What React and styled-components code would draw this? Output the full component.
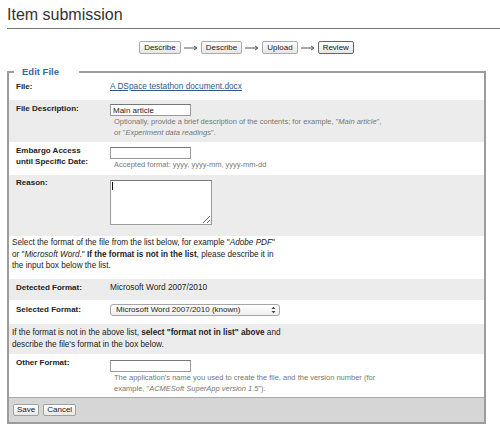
import React from 'react';
import styled, { createGlobalStyle } from 'styled-components';

const GlobalStyle = createGlobalStyle`
  body {
    margin: 0;
    background: #fff;
    font-family: "Liberation Sans", Arial, sans-serif;
    color: #222;
  }
`;

const steps = [
  { label: 'Describe' },
  { label: 'Describe' },
  { label: 'Upload' },
  { label: 'Review', current: true },
];

const Arrow = () => (
  <svg width='14' height='7' viewBox='0 0 14 7'>
    <path d='M0 4 H12.5' stroke='#555' strokeWidth='1' fill='none' />
    <path d='M10 2 L13 4 L10 6' stroke='#555' strokeWidth='1' fill='none' />
  </svg>
);

const SelectArrows = () => (
  <svg width='5' height='8' viewBox='0 0 5 8'>
    <path d='M0.5 3 L2.5 0.8 L4.5 3 Z' fill='#444' />
    <path d='M0.5 5 L2.5 7.2 L4.5 5 Z' fill='#444' />
  </svg>
);

const App = () => {
  return (
    <Page>
      <GlobalStyle />
      <Title>Item submission</Title>
      <Steps>
        {steps.map((s, i) => (
          <React.Fragment key={i}>
            {i > 0 && (
              <ArrowBox>
                <Arrow />
              </ArrowBox>
            )}
            <StepButton $current={s.current}>{s.label}</StepButton>
          </React.Fragment>
        ))}
      </Steps>

      <Fieldset>
        <Legend>Edit File</Legend>

        <Row $pt={2.5} $pb={8}>
          <Label>File:</Label>
          <Value>
            <FileLink href='#'>A DSpace testathon document.docx</FileLink>
          </Value>
        </Row>

        <Row $shade $pt={3} $pb={4}>
          <Label>File Description:</Label>
          <div>
            <TextInput defaultValue='Main article' $mt={1} />
            <Help>
              Optionally, provide a brief description of the contents; for
              example, "<i>Main article</i>",
              <br />
              or "<i>Experiment data readings</i>".
            </Help>
          </div>
        </Row>

        <Row $pt={2.5} $pb={5}>
          <Label>
            Embargo Access
            <br />
            until Specific Date:
          </Label>
          <div>
            <TextInput $mt={2} />
            <Help>Accepted format: yyyy, yyyy-mm, yyyy-mm-dd</Help>
          </div>
        </Row>

        <Row $shade $pt={2.5} $pb={7.5}>
          <Label>Reason:</Label>
          <div>
            <TextareaBox>
              <Reason />
              <Caret />
            </TextareaBox>
          </div>
        </Row>

        <Note $pt={1} $pb={7.5}>
          Select the format of the file from the list below, for example "
          <i>Adobe PDF</i>"
          <br />
          or "<i>Microsoft Word</i>." <b>If the format is not in the list</b>,
          please describe it in
          <br />
          the input box below the list.
        </Note>

        <Row $shade $pt={3} $pb={6.5}>
          <Label>Detected Format:</Label>
          <Value>Microsoft Word 2007/2010</Value>
        </Row>

        <Row $pt={4} $pb={8}>
          <Label>Selected Format:</Label>
          <div>
            <SelectBox>
              <FormatSelect defaultValue='docx'>
                <option value='docx'>Microsoft Word 2007/2010 (known)</option>
                <option value='other'>format not in list</option>
              </FormatSelect>
              <SelectIcon>
                <SelectArrows />
              </SelectIcon>
            </SelectBox>
          </div>
        </Row>

        <Note $shade $pt={3} $pb={4}>
          If the format is not in the above list,{' '}
          <b>select "format not in list" above</b> and
          <br />
          describe the file's format in the box below.
        </Note>

        <Row $pt={3} $pb={3}>
          <Label>Other Format:</Label>
          <div>
            <TextInput $mt={3} />
            <Help>
              The application's name you used to create the file, and the
              version number (for
              <br />
              example, "<i>ACMESoft SuperApp version 1.5</i>").
            </Help>
          </div>
        </Row>

        <Footer>
          <FormButton>Save</FormButton>
          <FormButton>Cancel</FormButton>
        </Footer>
      </Fieldset>
    </Page>
  );
};

export default App;

const Page = styled.div`
  padding-left: 7px;
`;

const Title = styled.h1`
  margin: 0;
  padding: 5px 0 3px;
  font-size: 16px;
  line-height: 20px;
  font-weight: normal;
  color: #333;
  border-bottom: 1px solid #777;
`;

const Steps = styled.nav`
  width: 479px;
  height: 13px;
  margin-top: 12px;
  display: flex;
  align-items: center;
  justify-content: center;
`;

const ArrowBox = styled.span`
  display: flex;
  margin: 0 3px;
`;

const StepButton = styled.span`
  box-sizing: border-box;
  height: 13px;
  padding: 0 4px;
  font-size: 8px;
  line-height: 11px;
  color: #222;
  border: 1px solid ${(p) => (p.$current ? '#666' : '#aaa')};
  border-radius: 2px;
  background: linear-gradient(#fff, #e6e6e6);
`;

const Fieldset = styled.fieldset`
  box-sizing: border-box;
  width: 479px;
  min-width: 0;
  margin: 12px 0 0;
  padding: 0;
  border: 2px solid #9c9c9c;
`;

const Legend = styled.legend`
  margin-left: 5px;
  padding: 0 20px 0 8px;
  font-size: 9.5px;
  line-height: 12px;
  font-weight: bold;
  color: #3a6aa3;
`;

const Row = styled.div`
  display: grid;
  grid-template-columns: 94px 1fr;
  align-items: start;
  padding: ${(p) => p.$pt}px 7px ${(p) => p.$pb}px;
  background: ${(p) => (p.$shade ? '#ececec' : '#fff')};
  font-size: 8px;
  line-height: 11.5px;
`;

const Label = styled.div`
  font-weight: bold;
  color: #222;
`;

const Value = styled.div`
  font-size: 8.3px;
`;

const FileLink = styled.a`
  color: #2f5b8a;
  text-decoration: underline;
`;

const TextInput = styled.input`
  display: block;
  box-sizing: border-box;
  width: 81px;
  height: 12px;
  margin: ${(p) => p.$mt || 0}px 0 0;
  padding: 0 2px;
  font-family: inherit;
  font-size: 8px;
  color: #222;
  border: 1px solid #9a9a9a;
  border-top-color: #777;
  background: #fff;
  outline: none;
`;

const Help = styled.div`
  margin-left: 4px;
  font-size: 7.5px;
  line-height: 11px;
  color: #777;
`;

const TextareaBox = styled.div`
  position: relative;
  display: inline-block;
  margin-top: 3px;
`;

const Reason = styled.textarea`
  display: block;
  box-sizing: border-box;
  width: 102px;
  height: 45px;
  margin: 0;
  border: 1px solid #9a9a9a;
  border-top-color: #777;
  outline: none;
  resize: both;
`;

const Caret = styled.span`
  position: absolute;
  left: 2px;
  top: 2px;
  width: 1px;
  height: 8px;
  background: #111;
`;

const Note = styled.div`
  padding: ${(p) => p.$pt}px 3px ${(p) => p.$pb}px;
  background: ${(p) => (p.$shade ? '#ececec' : '#fff')};
  font-size: 8.2px;
  line-height: 11.5px;
  color: #222;
`;

const SelectBox = styled.div`
  position: relative;
  display: inline-block;
`;

const FormatSelect = styled.select`
  display: block;
  box-sizing: border-box;
  width: 170px;
  height: 12px;
  margin: 0;
  padding: 0 5px;
  appearance: none;
  font-family: inherit;
  font-size: 8px;
  line-height: 10px;
  color: #222;
  border: 1px solid #a6a6a6;
  border-radius: 3px;
  background: linear-gradient(#fff, #eee);
  outline: none;
`;

const SelectIcon = styled.span`
  position: absolute;
  right: 4px;
  top: 2px;
  display: flex;
  pointer-events: none;
`;

const Footer = styled.div`
  display: flex;
  gap: 4px;
  padding: 6px 4px 6px;
  background: #d6d6d6;
  border-top: 1px solid #a8a8a8;
`;

const FormButton = styled.button`
  box-sizing: border-box;
  height: 12px;
  margin: 0;
  padding: 0 3px;
  font-family: inherit;
  font-size: 8px;
  line-height: 10px;
  color: #222;
  border: 1px solid #a0a0a0;
  border-radius: 2px;
  background: linear-gradient(#fff, #e8e8e8);
`;
